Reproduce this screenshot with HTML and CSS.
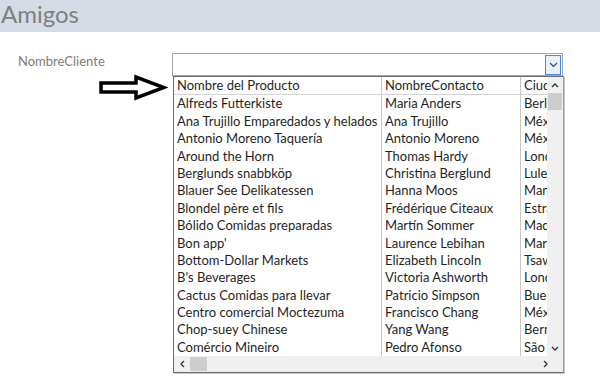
FILE: index.html
```html
<!DOCTYPE html>
<html lang="es">
<head>
    <meta charset="UTF-8">
    <meta name="viewport" content="width=device-width, initial-scale=1.0">
    <title>Amigos</title>
    <link rel="stylesheet" href="styles.css">
</head>
<body>
    <div class="title-bar">Amigos</div>

    <div class="form-row">
        <div class="field-label">NombreCliente</div>
        <div class="combo">
            <div class="combo-btn">
                <svg width="9" height="6" viewBox="0 0 9 6"><path d="M1 1 L4.5 4.5 L8 1" fill="none" stroke="#444" stroke-width="1.2"/></svg>
            </div>

            <!-- open list of the combo -->
            <div class="dropdown">
                <div class="list-body">
                    <div class="grid">
                        <div class="row head">
                            <span class="c1">Nombre del Producto</span>
                            <span class="c2">NombreContacto</span>
                            <span class="c3">Ciudad</span>
                        </div>
                        <div class="row"><span class="c1">Alfreds Futterkiste</span><span class="c2">Maria Anders</span><span class="c3">Berlin</span></div>
                        <div class="row"><span class="c1">Ana Trujillo Emparedados y helados</span><span class="c2">Ana Trujillo</span><span class="c3">México</span></div>
                        <div class="row"><span class="c1">Antonio Moreno Taquería</span><span class="c2">Antonio Moreno</span><span class="c3">México</span></div>
                        <div class="row"><span class="c1">Around the Horn</span><span class="c2">Thomas Hardy</span><span class="c3">London</span></div>
                        <div class="row"><span class="c1">Berglunds snabbköp</span><span class="c2">Christina Berglund</span><span class="c3">Luleå</span></div>
                        <div class="row"><span class="c1">Blauer See Delikatessen</span><span class="c2">Hanna Moos</span><span class="c3">Mannheim</span></div>
                        <div class="row"><span class="c1">Blondel père et fils</span><span class="c2">Frédérique Citeaux</span><span class="c3">Estrasburgo</span></div>
                        <div class="row"><span class="c1">Bólido Comidas preparadas</span><span class="c2">Martín Sommer</span><span class="c3">Madrid</span></div>
                        <div class="row"><span class="c1">Bon app'</span><span class="c2">Laurence Lebihan</span><span class="c3">Marsella</span></div>
                        <div class="row"><span class="c1">Bottom-Dollar Markets</span><span class="c2">Elizabeth Lincoln</span><span class="c3">Tsawassen</span></div>
                        <div class="row"><span class="c1">B's Beverages</span><span class="c2">Victoria Ashworth</span><span class="c3">London</span></div>
                        <div class="row"><span class="c1">Cactus Comidas para llevar</span><span class="c2">Patricio Simpson</span><span class="c3">Buenos Aires</span></div>
                        <div class="row"><span class="c1">Centro comercial Moctezuma</span><span class="c2">Francisco Chang</span><span class="c3">México</span></div>
                        <div class="row"><span class="c1">Chop-suey Chinese</span><span class="c2">Yang Wang</span><span class="c3">Bern</span></div>
                        <div class="row"><span class="c1">Comércio Mineiro</span><span class="c2">Pedro Afonso</span><span class="c3">São Paulo</span></div>
                    </div>
                    <div class="vscroll">
                        <span class="sb-arrow">
                            <svg width="8" height="5" viewBox="0 0 8 5"><path d="M1 4 L4 1 L7 4" fill="none" stroke="#333" stroke-width="1.3"/></svg>
                        </span>
                        <span class="vthumb"></span>
                        <span class="sb-fill"></span>
                        <span class="sb-arrow">
                            <svg width="8" height="5" viewBox="0 0 8 5"><path d="M1 1 L4 4 L7 1" fill="none" stroke="#333" stroke-width="1.3"/></svg>
                        </span>
                    </div>
                </div>
                <div class="hscroll">
                    <span class="sb-arrow">
                        <svg width="5" height="8" viewBox="0 0 5 8"><path d="M4 1 L1 4 L4 7" fill="none" stroke="#333" stroke-width="1.3"/></svg>
                    </span>
                    <span class="hthumb"></span>
                    <span class="sb-fill"></span>
                    <span class="sb-arrow">
                        <svg width="5" height="8" viewBox="0 0 5 8"><path d="M1 1 L4 4 L1 7" fill="none" stroke="#333" stroke-width="1.3"/></svg>
                    </span>
                    <span class="corner"></span>
                </div>
            </div>
        </div>
    </div>

    <!-- pointer drawn over the form -->
    <svg class="pointer" width="70" height="28" viewBox="0 0 70 28">
        <path d="M3 9 L38 9 L38 3 L66 13.5 L38 24 L38 18 L3 18 Z" fill="#fff" stroke="#000" stroke-width="3.5" stroke-linejoin="miter"/>
    </svg>
</body>
</html>
```

FILE: styles.css
```css
body {
    margin: 0;
    font-family: Lato, "Open Sans", sans-serif;
    background-color: #ffffff;
    position: relative;
    height: 379px;
    overflow: hidden;
}

.title-bar {
    height: 32px;
    background-color: #d6dce5;
    color: #7f7f7f;
    font-size: 24px;
    line-height: 28px;
    padding-left: 1px;
}

.form-row {
    display: flex;
    padding: 21px 0 0 18px;
}

.field-label {
    width: 154px;
    color: #857a72;
    font-size: 13px;
    line-height: 16px;
}

.combo {
    position: relative;
    width: 389px;
    height: 21px;
    border: 1px solid #a6a6a6;
    display: flex;
    justify-content: flex-end;
    align-items: stretch;
}

.combo-btn {
    width: 14px;
    margin: 1px 1px 0 0;
    border: 1px solid #3d8ee0;
    background-color: #e6f1fb;
    display: flex;
    align-items: center;
    justify-content: center;
}

.dropdown {
    position: absolute;
    top: 22px;
    left: 0;
    width: 389px;
    height: 295px;
    border: 1px solid #6b6b6b;
    border-right-color: #9a9a9a;
    background-color: #ffffff;
    display: flex;
    flex-direction: column;
    box-shadow: 1px 1px 0 #c8c8c8;
}

.list-body {
    display: flex;
    flex: 1;
    overflow: hidden;
}

.grid {
    flex: 1;
    overflow: hidden;
}

.row {
    display: flex;
    height: 17.4px;
    font-size: 13px;
    line-height: 16px;
    color: #1f1f1f;
    white-space: nowrap;
}

.row span {
    overflow: hidden;
    padding-left: 3px;
    box-sizing: border-box;
}

.row .c1 {
    width: 208px;
    flex: none;
    border-right: 1px solid #c6c6c6;
}

.row .c2 {
    width: 139px;
    flex: none;
    border-right: 1px solid #c6c6c6;
}

.row .c3 {
    flex: 1;
}

.row.head {
    border-bottom: 1px solid #d4d4d4;
}

.vscroll {
    width: 16px;
    background-color: #f0f0f0;
    display: flex;
    flex-direction: column;
}

.sb-arrow {
    display: flex;
    align-items: center;
    justify-content: center;
    width: 16px;
    height: 16px;
    flex: none;
}

.vthumb {
    height: 17px;
    margin: 0 1px;
    background-color: #cdcdcd;
}

.sb-fill {
    flex: 1;
}

.hscroll {
    height: 16px;
    background-color: #f0f0f0;
    display: flex;
}

.hthumb {
    width: 17px;
    background-color: #cdcdcd;
    margin: 1px 0;
}

.corner {
    width: 10px;
    background-color: #f0f0f0;
}

.pointer {
    position: absolute;
    left: 98px;
    top: 74px;
}
```
